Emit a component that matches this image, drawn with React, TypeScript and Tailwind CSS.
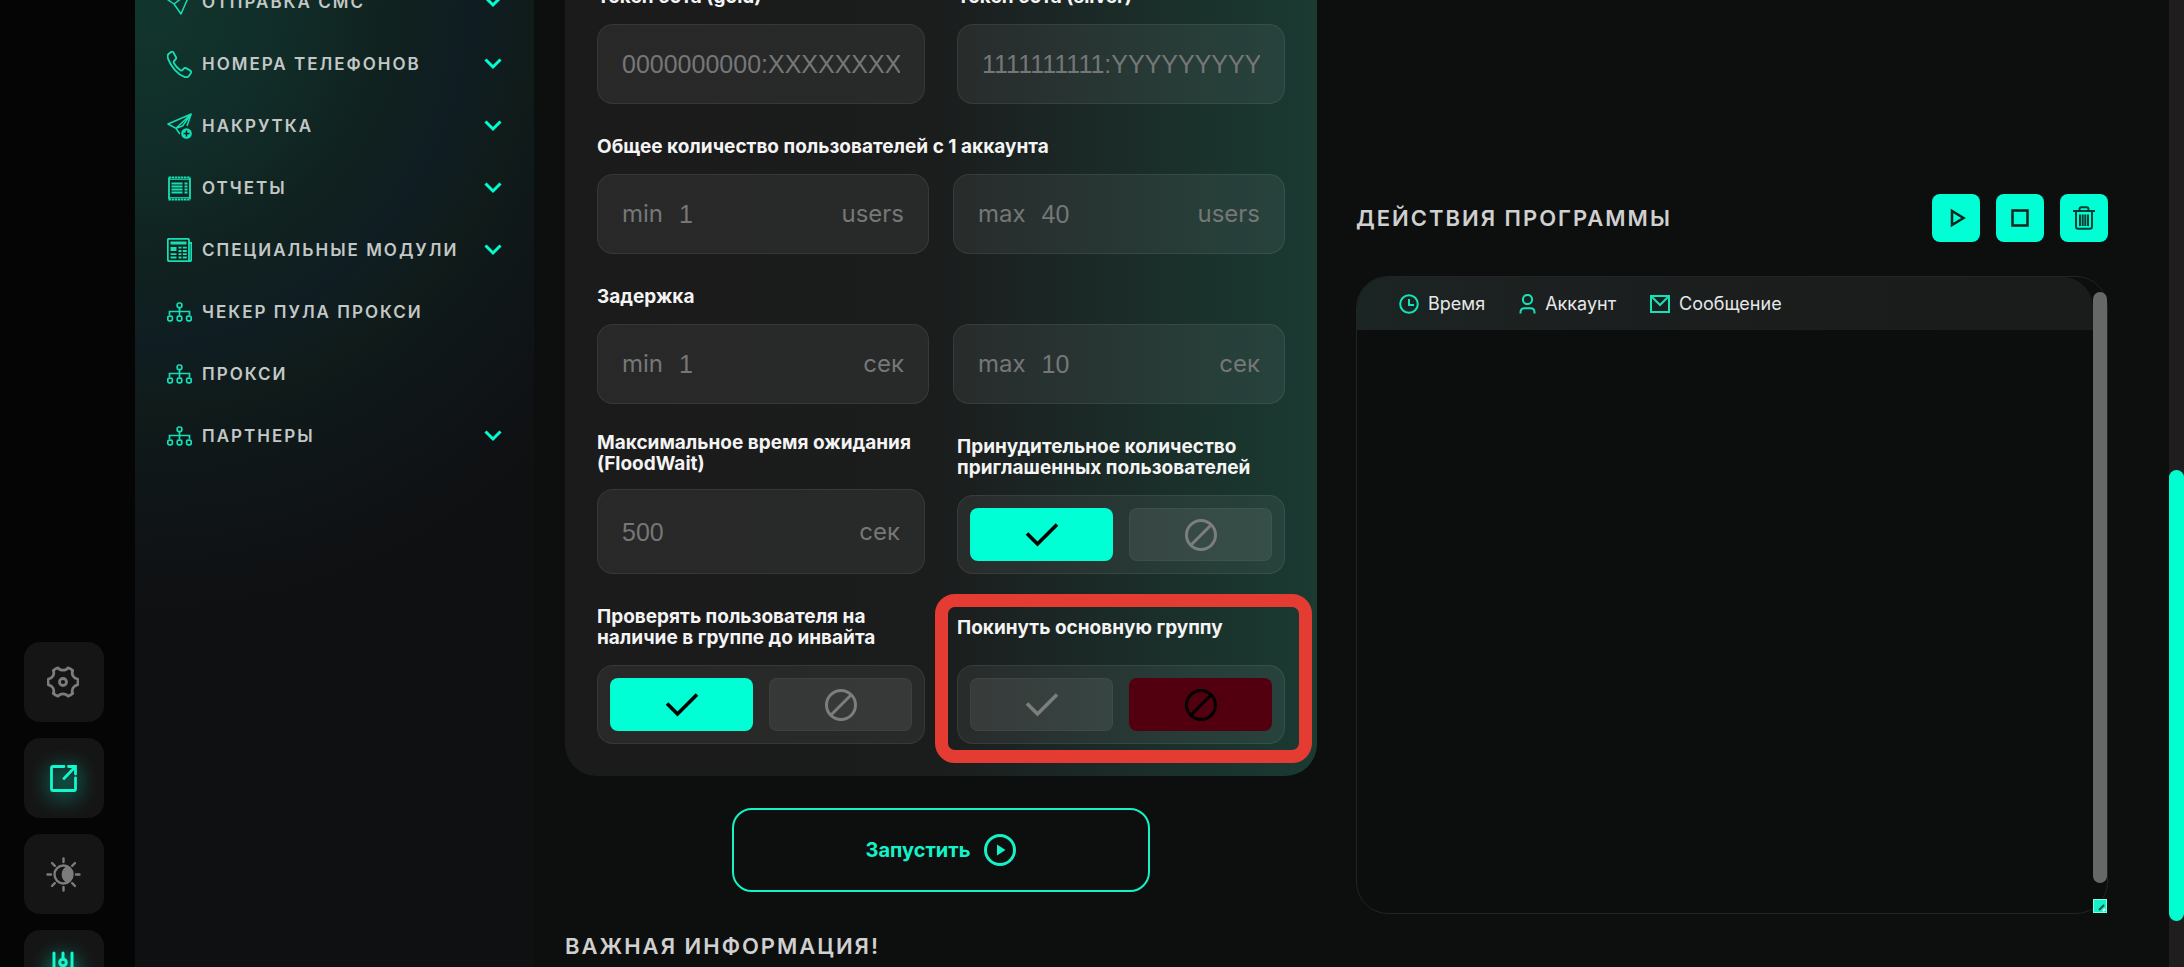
import { useState } from "react";
import type { ReactNode } from "react";

const PhoneIcon = () => (
  <svg width="25" height="27" viewBox="0 0 25 25" preserveAspectRatio="none" fill="none" stroke="currentColor" strokeWidth="1.8">
    <path d="M1.500 2.800 4 .9c.8-.6 1.800-.4 2.400.5l2.500 4.100c.5.8.3 1.700-.4 2.400L7.100 9.200c-.6.6-.6 1.300-.1 2.100 1.500 2.500 3.700 4.800 6.400 6.500.8.5 1.500.5 2.100-.1l1.200-1.400c.6-.7 1.500-.8 2.400-.4l4.200 2.300c.9.5 1.100 1.400.6 2.200l-1.800 2.500c-1 1.300-2.700 1.700-4.700 1C10.800 21.700 4.300 15 1.100 7.200.300 5.200.400 3.800 1.500 2.800z" />
  </svg>
);

const PlaneIcon = () => (
  <svg width="25" height="25" viewBox="0 0 25 25" fill="none" stroke="currentColor" strokeWidth="1.5" strokeLinejoin="round">
    <path d="M24 1 1 10l6 4 7 10L24 1zM7 14 24 1" />
  </svg>
);

const PlanePlusIcon = () => (
  <svg width="25" height="26" viewBox="0 0 25 26" fill="none" stroke="currentColor" strokeWidth="1.5" strokeLinejoin="round">
    <path d="M24.200 1 1 11l8 4.300L24.200 1l-4.200 12M9 15.300l3.800 5.700M9 15.300 15.500 13 24.200 1" />
    <circle cx="19.500" cy="20.500" r="5.300" fill="currentColor" stroke="none" />
    <path d="M19.500 17.500v6M16.500 20.500h6" stroke="#102324" />
  </svg>
);

const ReceiptIcon = () => (
  <svg width="25" height="25" viewBox="0 0 25 25" fill="none" stroke="currentColor" strokeWidth="1.8">
    <path d="M2 2v21M23 2v21" />
    <path d="M1.500 1.500h22M1.500 23.500h22" strokeWidth="2" strokeDasharray="2.500 .6" />
    <path d="M2 3.300h21M2 21.700h21" strokeWidth="1" />
    <path d="M4.500 7.500h11M4.500 10.500h11M4.500 13.500h11M4.500 16.500h11M17.500 7.500h3M17.500 10.500h3M17.500 13.500h3M17.500 16.500h3" />
  </svg>
);

const NewsIcon = () => (
  <svg width="25" height="24" viewBox="0 0 25 24" fill="none" stroke="currentColor" strokeWidth="1.800">
    <path d="M22 22.500V2c0-.7-.5-1.200-1.200-1.200H2C1.300.8.800 1.300.8 2v19.500c0 1 .7 1.700 1.700 1.700h20.300c1 0 1.500-.7 1.500-1.700V5H22" />
    <path d="M3.500 5h16" strokeWidth="3" />
    <path d="M3.500 11h6" strokeWidth="4" />
    <path d="M11.500 9.700h3M15.800 9.700h4M11.500 13h3M15.800 13h4M3.500 16.200h6M11.500 16.200h3M15.800 16.200h4M3.500 19.500h6M11.500 19.500h3M15.800 19.500h4" />
  </svg>
);

const NetworkIcon = () => (
  <svg width="25" height="20" viewBox="0 0 25 20" fill="none" stroke="currentColor" strokeWidth="1.700">
    <rect x="10.200" y="1" width="4.600" height="4.600" rx="1.800" />
    <path d="M12.500 5.600v8M2.500 13V9.500h20V13" />
    <rect x=".8" y="14.200" width="4.600" height="4.600" rx="1.500" />
    <rect x="10.200" y="14.200" width="4.600" height="4.600" rx="1.500" />
    <rect x="19.600" y="14.200" width="4.600" height="4.600" rx="1.500" />
  </svg>
);

const ChevronIcon = () => (
  <svg width="18" height="12" viewBox="0 0 18 12" fill="none" stroke="#00ffd0" strokeWidth="3">
    <path d="m1.500 1.500 7.500 7.500 7.500-7.500" />
  </svg>
);

const GearIcon = () => (
  <svg width="32" height="32" viewBox="0 0 32 32" fill="none" stroke="#7c7c7c" strokeWidth="2.800" strokeLinejoin="round">
    <path d="M11 1.800c1.500 2 3 2.400 5 2.400s3.500-.4 5-2.400c2 .7 3.300 1.500 4.700 2.800-.9 2.200-.6 3.800.4 5.500s2.200 2.700 4.600 3.100c.4 2 .4 3.600 0 5.600-2.400.4-3.600 1.400-4.600 3.100s-1.300 3.300-.4 5.500c-1.400 1.300-2.700 2.100-4.700 2.800-1.500-2-3-2.400-5-2.400s-3.500.4-5 2.400c-2-.7-3.300-1.500-4.700-2.800.9-2.200.6-3.800-.4-5.500s-2.200-2.700-4.600-3.100c-.4-2-.4-3.600 0-5.600 2.400-.4 3.600-1.400 4.600-3.100s1.300-3.300.4-5.500C7.700 3.300 9 2.500 11 1.800z" />
    <circle cx="16" cy="16" r="3.500" />
  </svg>
);

const ShareIcon = () => (
  <svg className="drop-shadow-[0_4px_10px_#00ffd0]" width="27" height="27" viewBox="0 0 27 27" fill="none" stroke="#12f7cb" strokeWidth="2.800">
    <path d="M14 1.500H3c-1 0-1.500.5-1.500 1.500v21c0 1 .5 1.500 1.500 1.500h21c1 0 1.500-.5 1.500-1.500V13" strokeLinecap="round" />
    <path d="M18.500 1.500h7V9M25.500 1.500 14 13.500" strokeLinecap="round" />
  </svg>
);

const SunIcon = () => (
  <svg width="35" height="35" viewBox="0 0 35 35" fill="none" stroke="#7c7c7c" strokeWidth="2.400" strokeLinecap="round">
    <circle cx="17.500" cy="17.500" r="9" />
    <path d="M21 10.500a8 8 0 0 1 0 14 8 8 0 0 1 0-14z" fill="#7c7c7c" />
    <path d="M17.500 1.500v3.500M17.500 30v3.500M1.500 17.500H5M30 17.500h3.500M6 6l2.800 2.800M26.200 26.200l2.800 2.800M6 29l2.800-2.800M26.200 8.800 29 6" />
  </svg>
);

const SlidersIcon = () => (
  <svg className="drop-shadow-[0_4px_10px_#00ffd0]" width="24" height="38" viewBox="0 0 24 38" fill="none" stroke="#12f7cb" strokeWidth="3" strokeLinecap="round">
    <path d="M3 2v17M12 2v6M12 15v21M21 2v17M3 27v9M21 27v9" />
    <circle cx="12" cy="11.500" r="3.300" />
    <path d="M0 19.500h6M18 19.500h6M0 24h6M18 24h6" />
  </svg>
);

const CheckIcon = () => (
  <svg width="34" height="26" viewBox="0 0 34 26" fill="none" stroke="currentColor" strokeWidth="3.600">
    <path d="m2 11.500 10.500 10.500L32 2.500" />
  </svg>
);

const BanIcon = () => (
  <svg width="32" height="32" viewBox="0 0 32 32" fill="none" stroke="currentColor" strokeWidth="3">
    <circle cx="16" cy="16" r="14.500" />
    <path d="M6 26 26 6" />
  </svg>
);

const navItems = [
  { name: "ОТПРАВКА СМС", icon: <PlaneIcon />, open: true },
  { name: "НОМЕРА ТЕЛЕФОНОВ", icon: <PhoneIcon />, open: true },
  { name: "НАКРУТКА", icon: <PlanePlusIcon />, open: true },
  { name: "ОТЧЕТЫ", icon: <ReceiptIcon />, open: true },
  { name: "СПЕЦИАЛЬНЫЕ МОДУЛИ", icon: <NewsIcon />, open: true },
  { name: "ЧЕКЕР ПУЛА ПРОКСИ", icon: <NetworkIcon />, open: false },
  { name: "ПРОКСИ", icon: <NetworkIcon />, open: false },
  { name: "ПАРТНЕРЫ", icon: <NetworkIcon />, open: true },
];

const railItems = [
  { name: "Настройки", icon: <GearIcon /> },
  { name: "Открыть", icon: <ShareIcon /> },
  { name: "Тема", icon: <SunIcon /> },
  { name: "Фильтры", icon: <SlidersIcon /> },
];

function Rail() {
  return (
    <div className="w-[135px] shrink-0 flex flex-col justify-end items-start bg-[#050505] pl-6">
      <div className="-mb-[43px] flex flex-col gap-4">
        {railItems.map((r) => (
          <button key={r.name} aria-label={r.name} className="w-20 h-20 pr-0.5 rounded-2xl bg-[#151515] flex items-center justify-center">
            {r.icon}
          </button>
        ))}
      </div>
    </div>
  );
}

function Sidebar() {
  return (
    <nav className="w-[399px] shrink-0 bg-[#0f1012] bg-[radial-gradient(ellipse_150%_64%_at_0%_0%,#11362d_0%,#112d29_25%,#10221f_42%,#0f1d22_56%,#101b1a_66%,#0f1416_84%,#0f1012_100%)] bg-no-repeat">
      <ul className="-mt-[29px]">
        {navItems.map((n) => (
          <li key={n.name}>
            <a href="#" className="h-[62px] px-8 flex items-center gap-[10px]">
              <span className="w-[25px] text-[#15dfb4]">{n.icon}</span>
              <span className="flex-1 text-[17px] leading-6 font-semibold tracking-[2px] whitespace-nowrap text-[#c3c8c7]">
                {n.name}
              </span>
              {n.open && <ChevronIcon />}
            </a>
          </li>
        ))}
      </ul>
    </nav>
  );
}

type FieldProps = {
  id: string;
  placeholder: string;
  prefix?: string;
  suffix?: string;
  tall?: boolean;
};

function Field({ id, placeholder, prefix, suffix, tall }: FieldProps) {
  return (
    <div
      className={
        (tall ? "h-[85px]" : "h-20") +
        " min-w-0 px-6 flex items-center gap-4 rounded-2xl border border-white/7 bg-white/6 text-[24px] leading-7 text-[#757777]"
      }
    >
      {prefix && <label htmlFor={id}>{prefix}</label>}
      <input
        id={id}
        placeholder={placeholder}
        className="flex-1 min-w-0 w-full bg-transparent outline-none font-['Liberation_Sans',sans-serif] text-[25px] placeholder:text-[#757777]"
      />
      {suffix && <span>{suffix}</span>}
    </div>
  );
}

function Toggle({ label, initial }: { label: string; initial: boolean }) {
  const [on, setOn] = useState(initial);

  return (
    <div role="group" aria-label={label} className="h-[79px] p-3 grid grid-cols-2 gap-4 rounded-2xl border border-white/7 bg-white/6">
      <button
        aria-label="Да"
        aria-pressed={on}
        onClick={() => setOn(true)}
        className={
          on
            ? "rounded-lg flex items-center justify-center bg-[#00ffd5] text-black"
            : "rounded-lg flex items-center justify-center border border-white/4 bg-white/7 text-[#7c7e7e]"
        }
      >
        <CheckIcon />
      </button>
      <button
        aria-label="Нет"
        aria-pressed={!on}
        onClick={() => setOn(false)}
        className={
          on
            ? "rounded-lg flex items-center justify-center border border-white/4 bg-white/7 text-[#7c7e7e]"
            : "rounded-lg flex items-center justify-center bg-[#52000f] text-black"
        }
      >
        <BanIcon />
      </button>
    </div>
  );
}

function Title({ children, htmlFor }: { children: ReactNode; htmlFor?: string }) {
  return (
    <label htmlFor={htmlFor} className="block mb-[17px] text-[19px] leading-[21px] font-bold text-[#f4f4f4]">
      {children}
    </label>
  );
}

function TwoLineTitle({ children, htmlFor }: { children: ReactNode; htmlFor?: string }) {
  return (
    <label htmlFor={htmlFor} className="h-[42px] flex items-center text-[19px] leading-[21px] font-bold whitespace-nowrap text-[#f4f4f4]">
      <span>{children}</span>
    </label>
  );
}

function Settings() {
  return (
    <div className="-mt-[14px] px-8 pb-8 rounded-b-[32px] bg-[linear-gradient(90deg,#1b1b1c_0%,#1b1c1c_48%,#1b2624_64%,#1a3a32_100%)]">
      <div className="grid grid-cols-2 gap-8">
        <div>
          <Title htmlFor="gold">Токен бота (gold)</Title>
          <Field id="gold" placeholder="0000000000:XXXXXXXXXXXXXXXX" />
        </div>
        <div>
          <Title htmlFor="silver">Токен бота (silver)</Title>
          <Field id="silver" placeholder="1111111111:YYYYYYYYYYYYYYYY" />
        </div>
      </div>

      <div className="pt-8">
        <Title htmlFor="users-min">Общее количество пользователей с 1 аккаунта</Title>
        <div className="grid grid-cols-2 gap-6">
          <Field id="users-min" prefix="min" placeholder="1" suffix="users" />
          <Field id="users-max" prefix="max" placeholder="40" suffix="users" />
        </div>
      </div>

      <div className="pt-8">
        <Title htmlFor="delay-min">Задержка</Title>
        <div className="grid grid-cols-2 gap-6">
          <Field id="delay-min" prefix="min" placeholder="1" suffix="сек" />
          <Field id="delay-max" prefix="max" placeholder="10" suffix="сек" />
        </div>
      </div>

      <div className="pt-7 grid grid-cols-2 items-end gap-8">
        <div className="flex flex-col gap-[15px]">
          <TwoLineTitle htmlFor="flood">
            Максимальное время ожидания
            <br />
            (FloodWait)
          </TwoLineTitle>
          <Field id="flood" placeholder="500" suffix="сек" tall />
        </div>
        <div className="flex flex-col gap-[17px]">
          <TwoLineTitle>
            Принудительное количество
            <br />
            приглашенных пользователей
          </TwoLineTitle>
          <Toggle label="Принудительное количество приглашенных пользователей" initial={true} />
        </div>
      </div>

      <div className="pt-8 grid grid-cols-2 items-end gap-8">
        <div className="flex flex-col gap-[17px]">
          <TwoLineTitle>
            Проверять пользователя на
            <br />
            наличие в группе до инвайта
          </TwoLineTitle>
          <Toggle label="Проверять пользователя на наличие в группе до инвайта" initial={true} />
        </div>
        <div className="relative flex flex-col gap-[17px]">
          <TwoLineTitle>Покинуть основную группу</TwoLineTitle>
          <Toggle label="Покинуть основную группу" initial={false} />
          <div className="absolute -top-3 -bottom-[19px] -left-[22px] -right-[27px] rounded-[20px] border-[13px] border-[#e43c33] pointer-events-none" />
        </div>
      </div>
    </div>
  );
}

function Log() {
  return (
    <section className="pt-[194px]">
      <div className="flex items-center justify-between">
        <h2 className="text-[22px] leading-7 font-semibold tracking-[2px] text-[#cfd0cf]">ДЕЙСТВИЯ ПРОГРАММЫ</h2>
        <div className="flex gap-4">
          <button aria-label="Запустить" className="w-12 h-12 rounded-lg bg-[#00ffd5] flex items-center justify-center">
            <svg className="ml-1" width="18" height="20" viewBox="0 0 18 20" fill="none" stroke="#06231d" strokeWidth="2.500">
              <path d="M3 3v14l11.500-7z" />
            </svg>
          </button>
          <button aria-label="Остановить" className="w-12 h-12 rounded-lg bg-[#00ffd5] flex items-center justify-center">
            <svg width="18" height="18" viewBox="0 0 18 18" fill="none" stroke="#06231d" strokeWidth="2.500">
              <rect x="1.500" y="1.500" width="15" height="15" />
            </svg>
          </button>
          <button aria-label="Очистить" className="w-12 h-12 rounded-lg bg-[#00ffd5] flex items-center justify-center">
            <svg width="22" height="24" viewBox="0 0 22 24" fill="none" stroke="#064034" strokeWidth="2">
              <path d="M0 5h22M6.500 5V3.200c0-1.200.7-1.900 1.900-1.900h5.200c1.200 0 1.900.7 1.900 1.900V5M3 5v15.500c0 1.500.8 2.300 2.200 2.300h11.600c1.400 0 2.200-.8 2.200-2.300V5M7 8.500V20M9.700 8.500V20M12.300 8.500V20M15 8.500V20" />
            </svg>
          </button>
        </div>
      </div>

      <div className="mt-[34px] h-[638px] flex rounded-[32px] border border-[#222424] bg-[#0c0e0d]">
        <div className="flex-1">
          <div className="rounded-tl-[31px] rounded-tr-[31px] bg-[linear-gradient(90deg,#1b2523_0%,#1c1f1f_30%,#1a1b1b_100%)] pl-[42px]">
            <table className="h-[53px] text-[18px] leading-6 text-[#e6e8e8]">
              <thead>
                <tr>
                  <th className="pr-[34px] font-normal">
                    <span className="flex items-center gap-[9px]">
                      <svg width="20" height="20" viewBox="0 0 20 20" fill="none" stroke="#14e2b8" strokeWidth="2">
                        <circle cx="10" cy="10" r="8.800" />
                        <path d="M10 5v6h5" />
                      </svg>
                      Время
                    </span>
                  </th>
                  <th className="pr-[34px] font-normal">
                    <span className="flex items-center gap-[9px]">
                      <svg width="17" height="20" viewBox="0 0 17 20" fill="none" stroke="#14e2b8" strokeWidth="2">
                        <circle cx="8.500" cy="5.500" r="4.600" />
                        <path d="M1.500 19.500v-1c0-2.700 1.600-4.300 4-4.300h6c2.400 0 4 1.600 4 4.300v1" />
                      </svg>
                      Аккаунт
                    </span>
                  </th>
                  <th className="font-normal">
                    <span className="flex items-center gap-[9px]">
                      <svg width="20" height="18" viewBox="0 0 20 18" fill="none" stroke="#14e2b8" strokeWidth="2">
                        <rect x="1" y="1" width="18" height="16" />
                        <path d="m1.500 1.500 8.500 8.500 8.500-8.500" />
                      </svg>
                      Сообщение
                    </span>
                  </th>
                </tr>
              </thead>
            </table>
          </div>
        </div>
        <div className="w-[14px] flex flex-col pt-[15px]">
          <div className="flex-1 rounded-full bg-[#666767]" />
          <div className="mt-4 h-[14px] bg-[#14f3c8] border border-[#7dffe6]">
            <svg width="12" height="12" viewBox="0 0 12 12" stroke="#0a5a49" strokeWidth="2">
              <path d="m5 10 5-5" />
              <path d="m9 11 2-2" stroke="#fff" />
            </svg>
          </div>
        </div>
      </div>
    </section>
  );
}

export default function App() {
  return (
    <div className="h-screen overflow-hidden flex bg-[#0d0e0e] font-['Inter',sans-serif]">
      <Rail />
      <Sidebar />
      <main className="flex-1 min-w-0 pl-[31px] pr-[61px] grid grid-cols-2 items-start gap-[39px]">
        <section>
          <Settings />
          <div className="mt-8 flex justify-center">
            <button className="w-[418px] h-[84px] flex items-center justify-center gap-[14px] rounded-[20px] border-2 border-[#14f3c8] text-[20px] leading-7 font-bold text-[#14f3c8]">
              Запустить
              <svg width="32" height="32" viewBox="0 0 32 32" fill="none" stroke="currentColor" strokeWidth="3">
                <circle cx="16" cy="16" r="14.500" />
                <path d="M13 10.500v11l8.500-5.500z" fill="currentColor" stroke="none" />
              </svg>
            </button>
          </div>
          <h2 className="mt-10 text-[22px] leading-7 font-semibold tracking-[2px] text-[#cfd0cf]">ВАЖНАЯ ИНФОРМАЦИЯ!</h2>
        </section>
        <Log />
      </main>
      <div className="w-[15px] shrink-0 bg-[#1f1d1e]">
        <div className="h-[48.6%]" />
        <div className="h-[46.6%] rounded-full bg-[#00ffd0]" />
      </div>
    </div>
  );
}
